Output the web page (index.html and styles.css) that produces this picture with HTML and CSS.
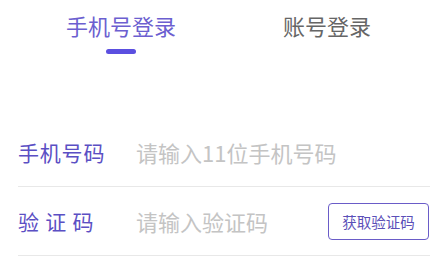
FILE: index.html
```html
<!DOCTYPE html>
<html lang="zh">
<head>
<meta charset="utf-8">
<link rel="stylesheet" href="styles.css">
</head>
<body>
<div class="page">
  <div class="tabs">
    <div class="tab active"><span class="tab-text">手机号登录</span><span class="bar"></span></div>
    <div class="tab"><span class="tab-text">账号登录</span></div>
  </div>
  <div class="form">
    <div class="row">
      <span class="label">手机号码</span>
      <span class="ph">请输入11位手机号码</span>
    </div>
    <div class="row">
      <span class="label">验 证 码</span>
      <span class="ph">请输入验证码</span>
      <span class="btn">获取验证码</span>
    </div>
  </div>
</div>
</body>
</html>
```
FILE: styles.css
```css
html, body {
  margin: 0;
  padding: 0;
  background: #ffffff;
}
body {
  font-family: "Noto Sans CJK SC", "Noto Sans", sans-serif;
  width: 447px;
  height: 262px;
  overflow: hidden;
}
.page {
  padding: 0 17px 0 18px;
}
.tabs {
  display: flex;
  padding-top: 10px;
  height: 118px;
  box-sizing: border-box;
}
.tab {
  flex: 1;
  display: flex;
  flex-direction: column;
  align-items: center;
}
.tab-text {
  font-size: 22px;
  line-height: 30px;
  color: #666666;
}
.tab.active .tab-text {
  color: #6c5fd0;
}
.bar {
  margin-top: 9px;
  width: 30px;
  height: 5px;
  border-radius: 3px;
  background: #5b4fe0;
}
.row {
  display: flex;
  align-items: center;
  height: 68px;
  border-bottom: 1px solid #e8e8e8;
}
.label {
  width: 118px;
  font-size: 21px;
  letter-spacing: 0.8px;
  color: #5b4fc4;
  white-space: pre;
}
.ph {
  flex: 1;
  font-size: 22px;
  color: #c4c4c4;
}
.btn {
  box-sizing: border-box;
  width: 101px;
  height: 37px;
  margin-right: 1px;
  border: 1.5px solid #6a5cc8;
  border-radius: 4px;
  display: flex;
  align-items: center;
  justify-content: center;
  font-size: 14.5px;
  color: #5b4fb8;
}
```
